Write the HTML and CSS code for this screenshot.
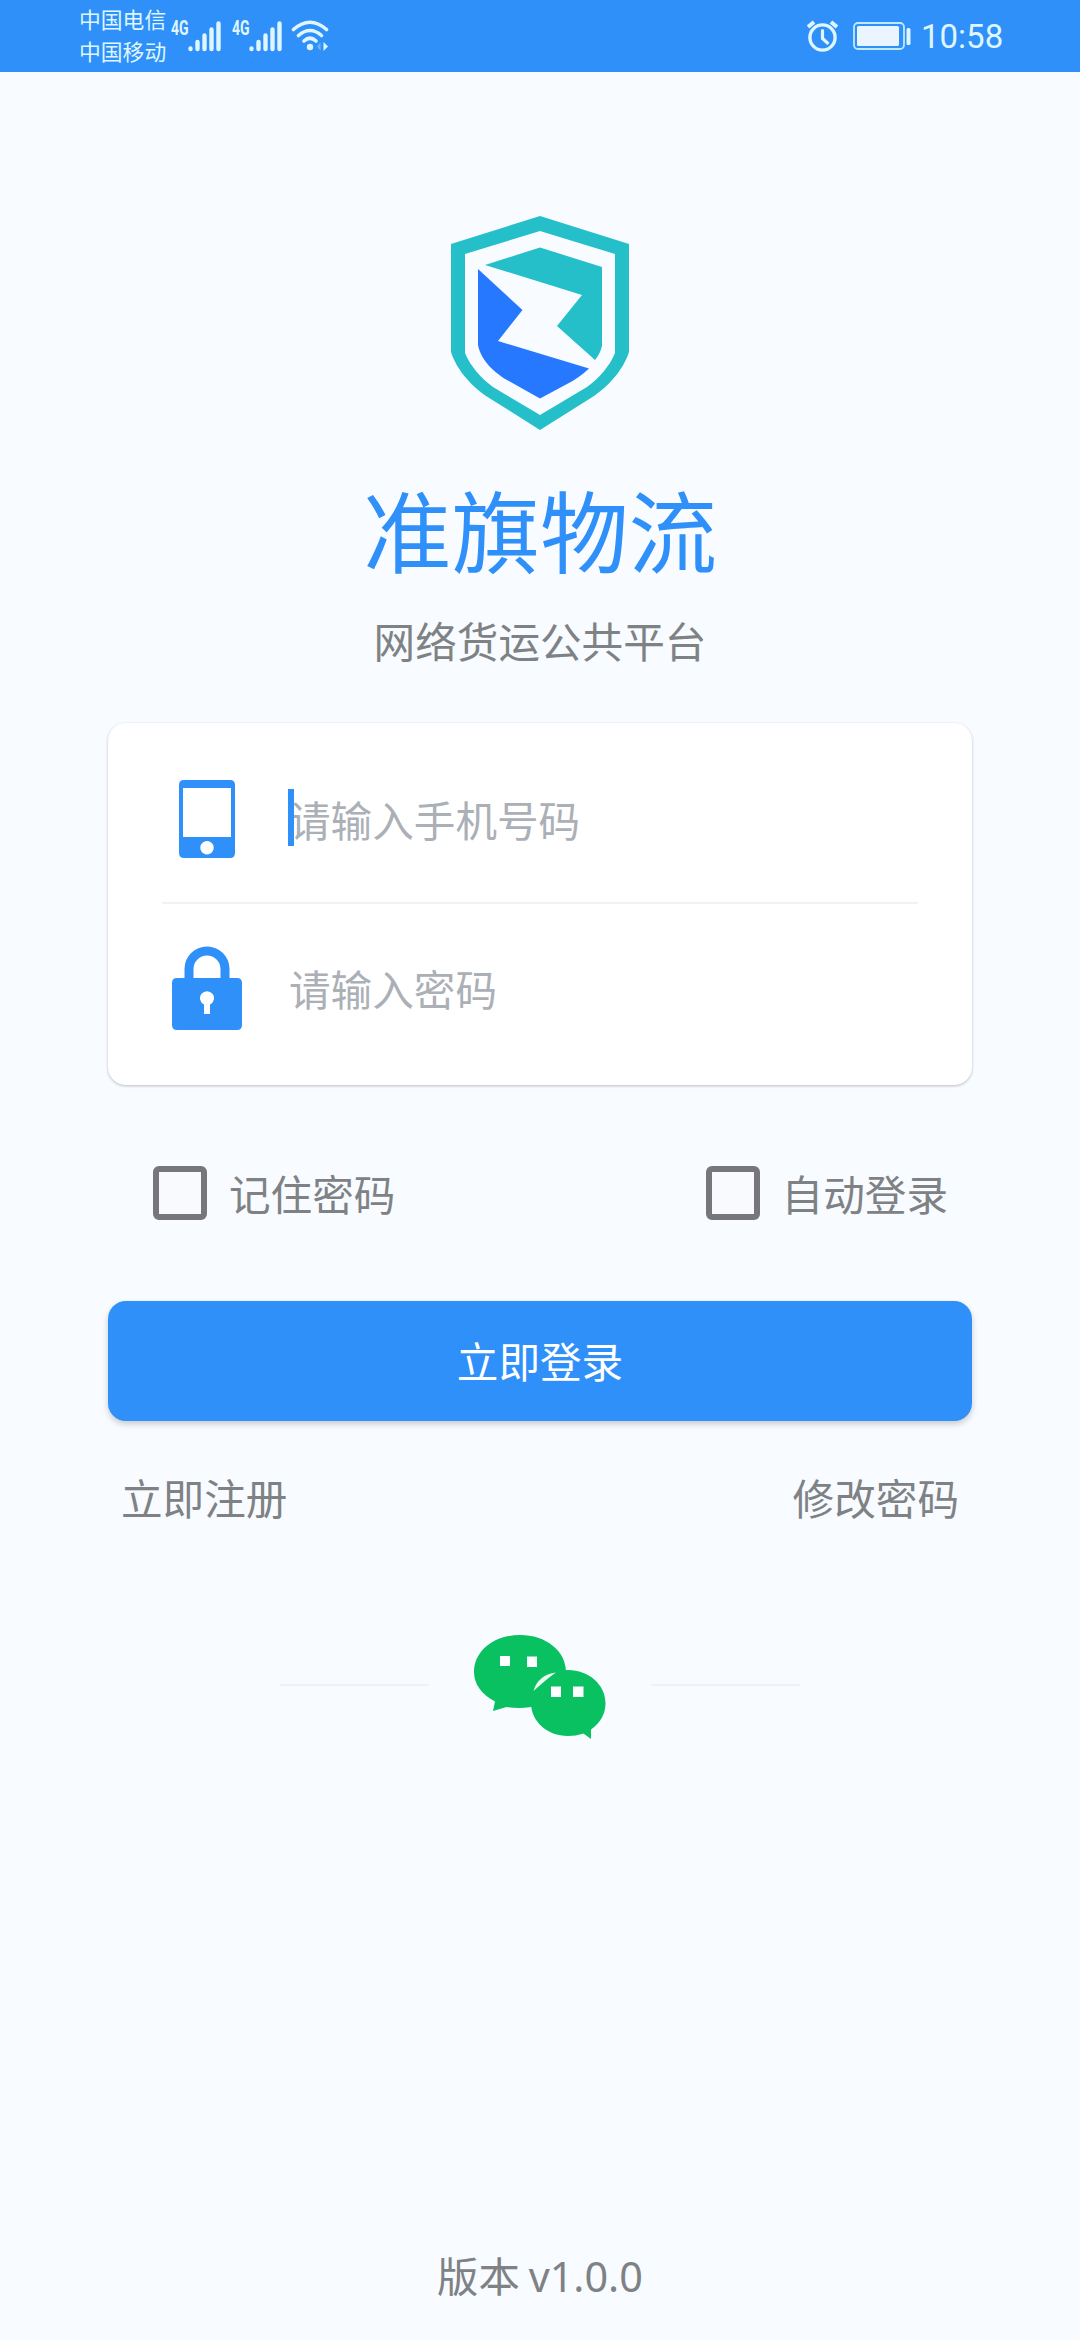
FILE: index.html
```html
<!DOCTYPE html>
<html lang="zh-CN">
<head>
<meta charset="utf-8">
<title>准旗物流</title>
<link rel="stylesheet" href="styles.css">
</head>
<body>
<header class="status">
  <div class="carriers"><span>中国电信</span><span>中国移动</span></div>
  <div class="signal">
    <span class="net">4G</span>
    <svg class="bars" width="34" height="32" viewBox="0 0 34 32" fill="none" stroke="#dff6ff" stroke-width="4.4" stroke-linecap="round"><path d="M2.5 28.5v.5M9.5 22v7M16.5 15.500v13.500M23.500 9.500v19.500M30.500 3.500v25.500"/></svg>
  </div>
  <div class="signal second">
    <span class="net">4G</span>
    <svg class="bars" width="34" height="32" viewBox="0 0 34 32" fill="none" stroke="#dff6ff" stroke-width="4.4" stroke-linecap="round"><path d="M2.5 28.5v.5M9.5 22v7M16.5 15.500v13.500M23.500 9.500v19.500M30.500 3.500v25.500"/></svg>
  </div>
  <svg class="wifi" width="38" height="32" viewBox="0 0 38 32" fill="none" stroke="#dff6ff" stroke-width="3.600" stroke-linecap="round"><path d="M2.500 9.500Q19-5 35.500 9.500M7.500 15.500Q19 5.500 30.500 15.500M13 21Q19 15.500 25 21"/><circle cx="19" cy="27" r="3.200" fill="#dff6ff" stroke="none"/><path d="M32.500 22v9l4.500-4.500z" fill="#dff6ff" stroke="none"/><path d="M29.500 22v9L26 26.500z" fill="#69b4fb" stroke="none"/></svg>
  <svg class="alarm" width="32" height="32" viewBox="0 0 32 32" fill="none" stroke="#dff6ff"><circle cx="15.500" cy="17.500" r="12.600" stroke-width="3.400"/><path d="M15.500 10.500v8l5 4.500" stroke-width="3.200" stroke-linecap="round"/><path d="M1 7l6-5M30 7l-6-5" stroke-width="4"/></svg>
  <svg class="battery" width="58" height="28" viewBox="0 0 58 28"><rect x="1" y="1" width="50" height="26" rx="4" fill="none" stroke="#bfe8ff" stroke-width="1.800"/><rect x="4" y="4" width="42" height="20" rx="1.500" fill="#eaf5ff"/><rect x="53.500" y="6" width="4" height="17" rx="1.500" fill="#dff6ff"/></svg>
  <span class="clock">10:58</span>
</header>
<main class="page">
  <svg class="logo" width="180" height="216" viewBox="450 215 180 216"><path fill="#24bfc8" fill-rule="evenodd" d="M540 216L629 244V352C623 371 607 387 594 396L540 430 486 396C473 387 457 371 451 352V244ZM540 231L465 254V353C470 366 482 379 493 387L540 415 587 387C598 379 610 366 615 353V254Z"/><path fill="#24bfc8" d="M485 265L540 247.500 602 267V346Q600 354 595 360L557 326 582 295Z"/><path fill="#2678ff" d="M478 269L522.500 310 498 341 589 368.500Q579 378 567 384L540 398.500 507 380C495 373 481 361 478 345Z"/></svg>
  <h1 class="title">准旗物流</h1>
  <p class="slogan">网络货运公共平台</p>
  <section class="card">
    <div class="field">
      <svg class="icon" width="70" height="86" viewBox="0 0 70 86"><path fill="#2f90f9" fill-rule="evenodd" d="M12 4h46q5 0 5 5v68q0 5-5 5H12q-5 0-5-5V9q0-5 5-5zM11 12v49h48V12zM35 65a6.700 6.700 0 1 0 .01 0z"/></svg>
      <span class="placeholder focused">请输入手机号码</span>
    </div>
    <div class="divider"></div>
    <div class="field">
      <svg class="icon" width="70" height="86" viewBox="0 0 70 86"><path d="M17 36V24a18 18 0 0 1 36 0v12" fill="none" stroke="#2f90f9" stroke-width="9"/><path fill="#2f90f9" fill-rule="evenodd" d="M5 33h60q5 0 5 5v42q0 5-5 5H5q-5 0-5-5V38q0-5 5-5zM32 69h6V59.500a7 7 0 1 0-6 0z"/></svg>
      <span class="placeholder">请输入密码</span>
    </div>
  </section>
  <div class="options">
    <label class="option"><span class="box"></span>记住密码</label>
    <label class="option"><span class="box"></span>自动登录</label>
  </div>
  <div class="submit">立即登录</div>
  <nav class="links"><span>立即注册</span><span>修改密码</span></nav>
  <div class="social">
    <span class="line"></span>
    <svg width="134" height="106" viewBox="0 0 134 106"><path fill="#09c160" d="M47 1C73 1 93 17 93 38S73 74 47 74Q39 74 33.500 73L20 77l2-9.500C9 61 1 50 1 38 1 17 21 1 47 1z"/><path fill="#09c160" d="M95 36C116 36 132.500 51 132.500 69Q132.500 85 118 95.500V105L110.500 99.500Q103 102 95 102C74 102 58 87 58 69S74 36 95 36z"/><path fill="#eafcf0" d="M60.500 57Q65 41 83 38.500Q76 43 60.500 57z"/><path fill="#fff" d="M27 22h10v10H27zM54 22.500h10v10.500H54zM78 52.500h10v10.500H78zM100 52.500h10.500v10.500H100z"/></svg>
    <span class="line"></span>
  </div>
  <footer class="version">版本 v1.0.0</footer>
</main>
</body>
</html>
```

FILE: styles.css
```css
* { box-sizing: border-box; }
body {
  margin: 0;
  width: 1080px;
  height: 2340px;
  display: flex;
  flex-direction: column;
  background: #f8fbff;
  color: #7f8284;
  font-family: "Noto Sans CJK SC", sans-serif;
  font-size: 41.600px;
  line-height: 60px;
}
svg { display: block; flex: none; }
.status {
  height: 72px;
  padding-left: 79px;
  display: flex;
  align-items: flex-start;
  background: #2f90f9;
  color: #dff6ff;
}
.carriers {
  width: 92px;
  padding-top: 3px;
  display: flex;
  flex-direction: column;
  font-size: 21.800px;
  line-height: 32px;
  white-space: nowrap;
}
.signal {
  width: 51px;
  padding-top: 20px;
  display: flex;
  justify-content: space-between;
}
.second { margin-left: 10px; }
.net {
  width: 17px;
  font: bold 20px/16px "Roboto", sans-serif;
  transform: scaleX(.7);
  transform-origin: left;
}
.wifi { margin: 20px 0 0 8px; }
.alarm { margin: 20px 0 0 478px; }
.battery { margin: 22px 0 0 14px; }
.clock {
  margin: 18px 0 0 10px;
  font: 33px/38px "Roboto", sans-serif;
}
.page {
  flex: 1;
  padding: 143px 108px 0;
  display: flex;
  flex-direction: column;
}
.logo { align-self: center; }
.title {
  margin: 46px 0 0;
  color: #2f90f9;
  font-size: 88.500px;
  line-height: 100px;
  font-weight: 400;
  text-align: center;
}
.slogan { margin: 33px 0 0; text-align: center; }
.card {
  height: 362px;
  margin-top: 53px;
  padding: 0 54px;
  border-radius: 18px;
  background: #fff;
  box-shadow: 0 1px 3px rgba(0, 0, 0, .25);
}
.field {
  height: 179px;
  padding: 12px 0 0 10px;
  display: flex;
  align-items: center;
}
.divider + .field { height: 160px; padding-top: 8px; }
.divider { height: 2px; background: #f2f2f3; }
.placeholder {
  position: relative;
  margin-left: 46px;
  padding-left: 1px;
  color: #abafb6;
}
.focused::before {
  content: "";
  position: absolute;
  left: 0;
  top: 0;
  width: 6px;
  height: 57px;
  background: #2f90f9;
}
.options {
  margin-top: 78px;
  padding: 0 24px 0 45px;
  display: flex;
  justify-content: space-between;
}
.option { display: flex; align-items: center; gap: 22px; }
.box {
  width: 54px;
  height: 54px;
  border: 6px solid #77767b;
  border-radius: 6px;
  background: #f9fafe;
}
.submit {
  height: 120px;
  margin-top: 78px;
  border-radius: 18px;
  background: #2f90f9;
  box-shadow: 0 3px 6px rgba(0, 0, 0, .2);
  color: #fff;
  line-height: 118px;
  text-align: center;
}
.links {
  margin-top: 46px;
  padding: 0 13px;
  display: flex;
  justify-content: space-between;
}
.social {
  margin-top: 107px;
  display: flex;
  justify-content: center;
  gap: 44px;
}
.line { width: 149px; height: 2px; margin-top: 50px; background: #eef1f3; }
.version {
  margin: auto 0 34px;
  font-family: "Noto Sans", "Noto Sans CJK SC", sans-serif;
  font-size: 41.400px;
  word-spacing: -2px;
  text-align: center;
}
```
